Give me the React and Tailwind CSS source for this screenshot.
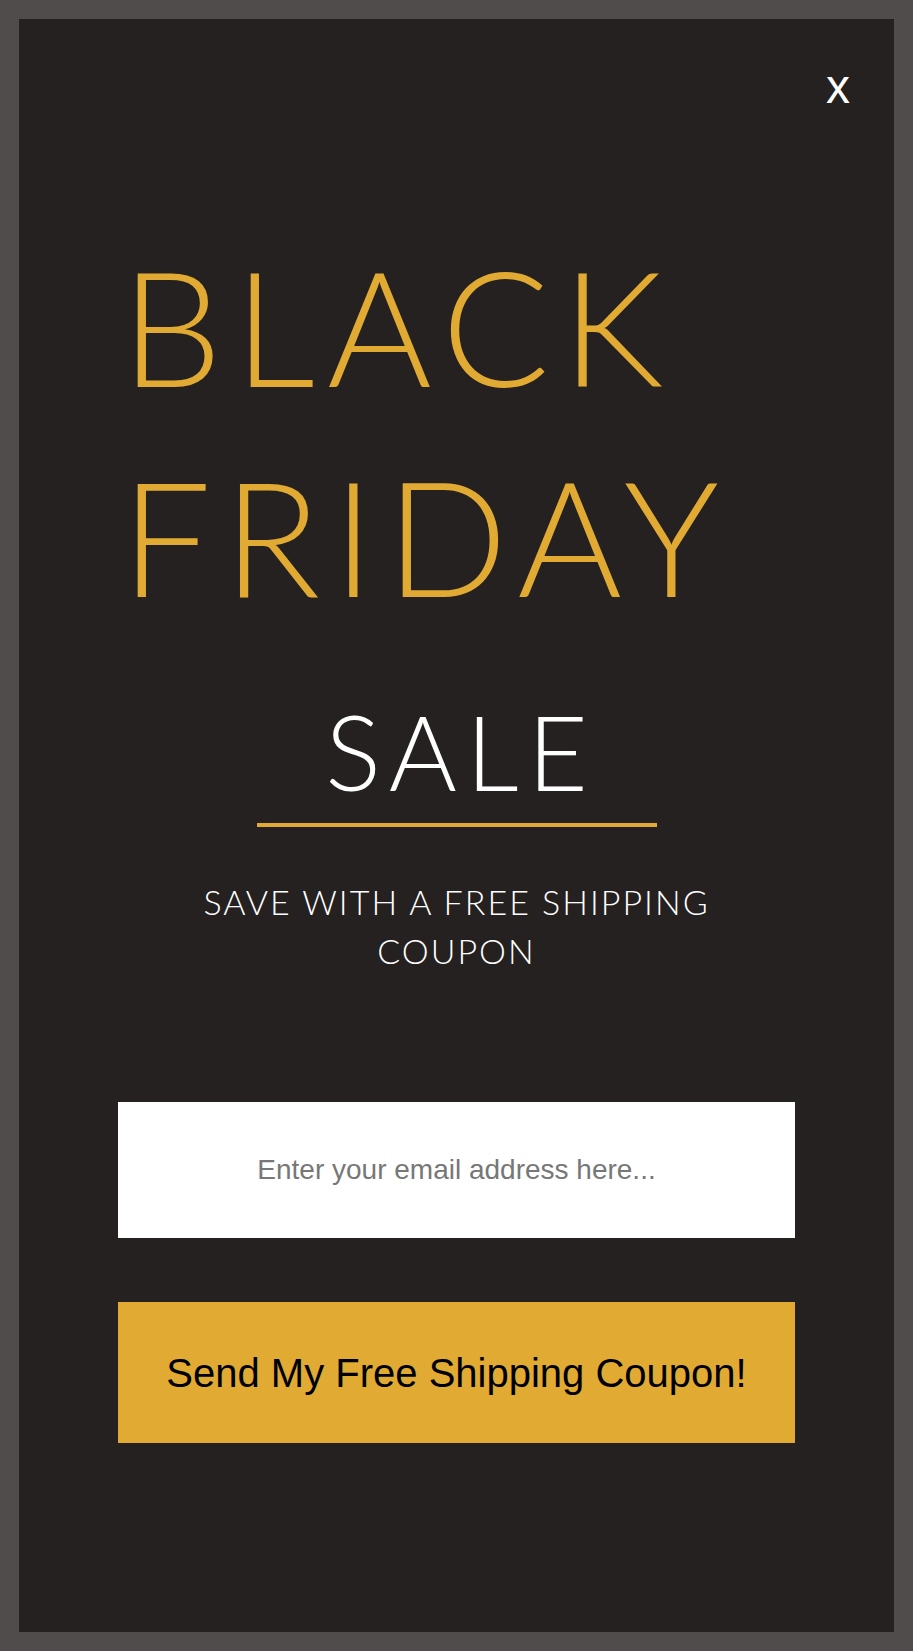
import React from 'react';

const gold = 'text-[#e1aa32]';

const CloseButton = () => (
  <button
    type="button"
    className="absolute right-[44px] top-[38px] text-[48px] leading-[60px] text-white font-['Liberation_Sans',Arial,sans-serif]"
  >
    x
  </button>
);

export default function App() {
  return (
    <div className="min-h-screen w-full bg-[#514c4c] p-[19px]">
      <div className="relative flex h-[1613px] flex-col bg-[#252120] font-['Lato','Noto_Sans',sans-serif]">
        <CloseButton />

        <h1 className={`mt-[201px] pl-[102px] text-[160px] font-light leading-[210px] tracking-[12px] ${gold}`}>
          BLACK
          <br />
          FRIDAY
        </h1>

        <div className="mt-[41px] flex flex-col items-center">
          <p className="pl-[9px] text-[104px] font-light leading-[139px] tracking-[9px] text-white">SALE</p>
          <div className="mt-[3px] h-[4px] w-[400px] bg-[#e1aa32]" />
          <p className="mt-[50px] text-center text-[34px] font-light leading-[49px] tracking-[2px] text-white">
            SAVE WITH A FREE SHIPPING
            <br />
            COUPON
          </p>
        </div>

        <form className="mt-[127px] flex flex-col gap-[64px] px-[99px]">
          <input
            type="email"
            placeholder="Enter your email address here..."
            className="h-[136px] w-full bg-white text-center text-[28px] text-[#333] placeholder:text-[#777] outline-none font-['Liberation_Sans',Arial,sans-serif]"
          />
          <button
            type="button"
            className="h-[141px] w-full bg-[#e1aa32] text-[40px] text-black font-['Liberation_Sans',Arial,sans-serif]"
          >
            Send My Free Shipping Coupon!
          </button>
        </form>
      </div>
    </div>
  );
}
